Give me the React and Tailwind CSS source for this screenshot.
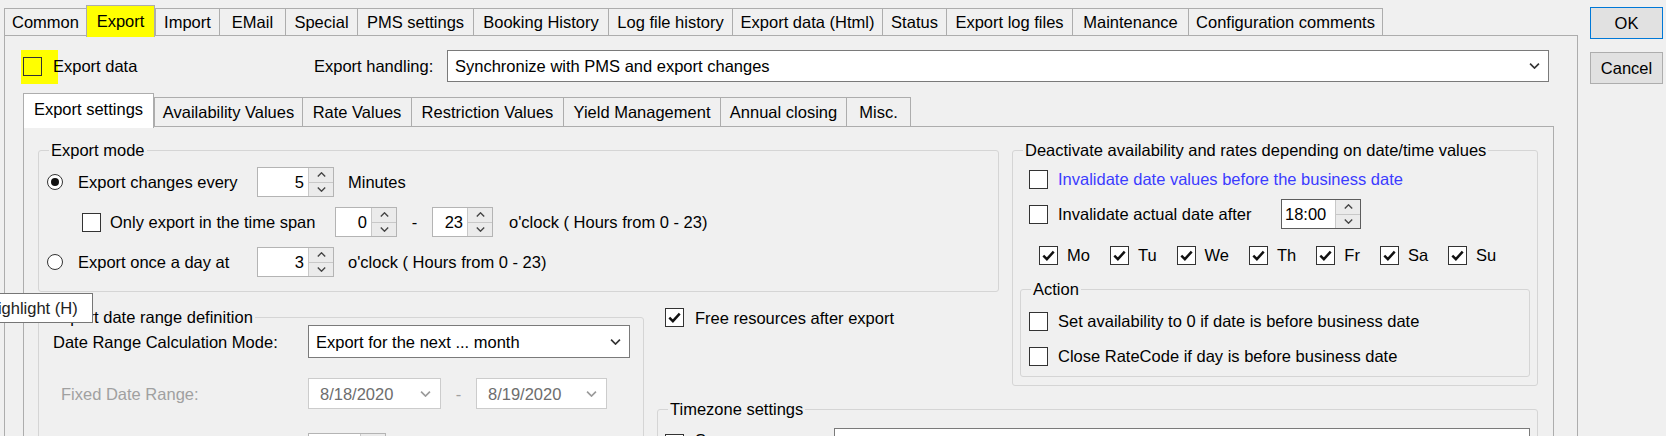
import clsx from 'clsx';

const outerTabs = [
  { label: 'Common', w: 'w-[82px]' },
  { label: 'Export', w: 'w-[69px]', active: true },
  { label: 'Import', w: 'w-[64px]' },
  { label: 'EMail', w: 'w-[66px]' },
  { label: 'Special', w: 'w-[72px]' },
  { label: 'PMS settings', w: 'w-[116px]' },
  { label: 'Booking History', w: 'w-[135px]' },
  { label: 'Log file history', w: 'w-[124px]' },
  { label: 'Export data (Html)', w: 'w-[150px]' },
  { label: 'Status', w: 'w-[64px]' },
  { label: 'Export log files', w: 'w-[126px]' },
  { label: 'Maintenance', w: 'w-[116px]' },
  { label: 'Configuration comments', w: 'w-[195px]' },
];

const innerTabs = [
  { label: 'Export settings', w: 'w-[131px]', active: true },
  { label: 'Availability Values', w: 'w-[148px]' },
  { label: 'Rate Values', w: 'w-[109px]' },
  { label: 'Restriction Values', w: 'w-[152px]' },
  { label: 'Yield Management', w: 'w-[157px]' },
  { label: 'Annual closing', w: 'w-[126px]' },
  { label: 'Misc.', w: 'w-[65px]' },
];

const days = ['Mo', 'Tu', 'We', 'Th', 'Fr', 'Sa', 'Su'];

// clear = no white fill, so the highlighter colour shows through the box
const Check = ({ checked, clear }) => (
  <span
    className={clsx(
      'relative flex h-[19px] w-[19px] shrink-0 items-center justify-center border border-[#333333]',
      clear ? 'bg-transparent' : 'bg-white',
    )}
  >
    {checked && (
      <svg width="13" height="11" viewBox="0 0 12 10">
        <path d="M1.2 5.2 L4.5 8.4 L10.8 1.4" fill="none" stroke="#111" strokeWidth="2.3" />
      </svg>
    )}
  </span>
);

const Radio = ({ checked }) => (
  <span className="flex h-[16px] w-[16px] shrink-0 items-center justify-center rounded-full border border-[#333333] bg-white">
    {checked && <span className="h-[8px] w-[8px] rounded-full bg-[#111]" />}
  </span>
);

const Chevron = ({ up, color = '#444', w = 9, h = 5 }) => (
  <svg width={w} height={h} viewBox="0 0 9 5">
    <path d={up ? 'M0.8 4.4 L4.5 0.8 L8.2 4.4' : 'M0.8 0.6 L4.5 4.2 L8.2 0.6'} fill="none" stroke={color} strokeWidth="1.4" />
  </svg>
);

const Spinner = ({ value, className, left, dark }) => (
  <div className={clsx('flex h-[30px] shrink-0 border bg-white', dark ? 'border-[#5c5c5c]' : 'border-[#b4b4b4]', className)}>
    <span className={clsx('flex flex-1 items-center', left ? 'pl-[3px]' : 'justify-end pr-[4px]')}>{value}</span>
    <div className="flex w-[25px] flex-col border-l border-[#c8c8c8]">
      <span className="flex flex-1 items-center justify-center border-b border-[#c8c8c8] bg-[#ebebeb]">
        <Chevron up />
      </span>
      <span className="flex flex-1 items-center justify-center bg-[#ebebeb]">
        <Chevron />
      </span>
    </div>
  </div>
);

const Combo = ({ value, className }) => (
  <div className={clsx('flex shrink-0 items-center border border-[#7a7a7a] bg-white', className)}>
    <span className="flex-1 truncate pl-[7px]">{value}</span>
    <span className="mr-[8px]">
      <Chevron color="#333" w={11} h={6} />
    </span>
  </div>
);

const DatePicker = ({ value, className }) => (
  <div className={clsx('flex h-[31px] shrink-0 items-center border border-[#cccccc] bg-white text-[#6d6d6d]', className)}>
    <span className="flex-1 pl-[11px]">{value}</span>
    <span className="mr-[9px]">
      <Chevron color="#9a9a9a" w={11} h={6} />
    </span>
  </div>
);

const GroupBox = ({ title, className, children }) => (
  <fieldset className={clsx('min-w-0 rounded-[3px] border border-[#d5d5d5]', className)}>
    <legend className="ml-[10px] px-[2px] leading-[18px]">{title}</legend>
    {children}
  </fieldset>
);

const CheckRow = ({ label, checked, className, gap = 'gap-[10px]' }) => (
  <div className={clsx('flex h-[20px] items-center', gap, className)}>
    <Check checked={checked} />
    <span className="whitespace-nowrap">{label}</span>
  </div>
);

const App = () => {
  return (
    <div className="relative flex h-[436px] w-[1666px] overflow-hidden bg-[#f0f0f0] pl-[4px] pt-[5px] font-['Liberation_Sans',Arial,sans-serif] text-[16.5px] leading-[20px] text-black">
      <div className="flex w-[1574px] shrink-0 flex-col">
        <div className="flex h-[30px] items-end">
          {outerTabs.map((tab, index) => (
            <div
              key={tab.label}
              className={clsx(
                'flex shrink-0 items-center justify-center whitespace-nowrap border-[#adadad]',
                tab.w,
                tab.active ? 'relative z-10 -mb-[2px] h-[32px] border-x border-t bg-[#ffff00] pb-[2px]' : 'h-[27px] border-l border-t bg-[#f0f0f0]',
                index === outerTabs.length - 1 && 'border-r',
              )}
            >
              {tab.label}
            </div>
          ))}
        </div>

        <div className="h-[420px] border border-[#adadad] bg-[#f0f0f0] pt-[14px]">
          <div className="relative flex h-[32px] items-center pr-[28px]">
            <span className="absolute left-[16px] top-0 h-[34px] w-[37px] bg-[#ffff00]" />
            <div className="flex w-[309px] shrink-0 items-center gap-[11px] pl-[18px]">
              <Check clear />
              <span className="relative">Export data</span>
            </div>
            <span className="w-[133px] shrink-0">Export handling:</span>
            <Combo value="Synchronize with PMS and export changes" className="h-[32px] flex-1" />
          </div>

          <div className="ml-[18px] mt-[11px] flex h-[33px] items-end">
            {innerTabs.map((tab, index) => (
              <div
                key={tab.label}
                className={clsx(
                  'flex shrink-0 items-center justify-center whitespace-nowrap border-[#adadad]',
                  tab.w,
                  tab.active ? 'relative z-10 -mb-[2px] h-[35px] border-x border-t bg-white pb-[5px]' : 'h-[29px] border-l border-t bg-[#f0f0f0]',
                  index === innerTabs.length - 1 && 'border-r',
                )}
              >
                {tab.label}
              </div>
            ))}
          </div>

          <div className="ml-[18px] h-[320px] w-[1531px] border border-[#adadad] bg-[#f0f0f0]">
            <div className="grid grid-cols-[606px_342px_526px] grid-rows-[167px_92px_auto] gap-x-[13px] pl-[14px] pt-[14px]">
              <GroupBox title="Export mode" className="col-span-2 col-start-1 row-start-1 h-[151px]">
                <div className="flex flex-col gap-[10px] pl-[8px] pt-[8px]">
                  <div className="flex h-[30px] items-center">
                    <div className="flex w-[210px] shrink-0 items-center gap-[15px]">
                      <Radio checked />
                      <span>Export changes every</span>
                    </div>
                    <Spinner value="5" className="w-[77px]" />
                    <span className="ml-[14px]">Minutes</span>
                  </div>
                  <div className="flex h-[30px] items-center pl-[35px]">
                    <div className="flex w-[253px] shrink-0 items-center gap-[9px]">
                      <Check />
                      <span>Only export in the time span</span>
                    </div>
                    <Spinner value="0" className="w-[62px]" />
                    <span className="w-[35px] shrink-0 text-center">-</span>
                    <Spinner value="23" className="w-[61px]" />
                    <span className="ml-[16px] whitespace-nowrap">o'clock ( Hours from 0 - 23)</span>
                  </div>
                  <div className="flex h-[30px] items-center">
                    <div className="flex w-[210px] shrink-0 items-center gap-[15px]">
                      <Radio />
                      <span>Export once a day at</span>
                    </div>
                    <Spinner value="3" className="w-[77px]" />
                    <span className="ml-[14px] whitespace-nowrap">o'clock ( Hours from 0 - 23)</span>
                  </div>
                </div>
              </GroupBox>

              <GroupBox title="Deactivate availability and rates depending on date/time values" className="col-start-3 row-span-2 row-start-1 h-[245px]">
                <div className="flex flex-col pl-[16px] pt-[10px]">
                  <CheckRow label="Invalidate date values before the business date" className="text-[#3c3cff]" />
                  <div className="mt-[10px] flex h-[30px] items-center">
                    <Check />
                    <span className="ml-[10px] w-[223px] shrink-0">Invalidate actual date after</span>
                    <Spinner value="18:00" left dark className="w-[80px]" />
                  </div>
                  <div className="mt-[16px] flex h-[20px] items-center gap-[20px] pl-[10px]">
                    {days.map((day) => (
                      <CheckRow key={day} label={day} checked gap="gap-[9px]" />
                    ))}
                  </div>
                </div>
                <GroupBox title="Action" className="mx-[7px] mt-[15px] h-[97px]">
                  <div className="flex flex-col gap-[15px] pl-[8px] pt-[13px]">
                    <CheckRow label="Set availability to 0 if date is before business date" />
                    <CheckRow label="Close RateCode if day is before business date" />
                  </div>
                </GroupBox>
              </GroupBox>

              <GroupBox title="Export date range definition" className="col-start-1 row-span-2 row-start-2 h-[200px]">
                <div className="-mt-[1px] pl-[14px]">
                  <div className="flex h-[33px] items-center">
                    <span className="w-[255px] shrink-0">Date Range Calculation Mode:</span>
                    <Combo value="Export for the next ... month" className="h-[33px] w-[322px]" />
                  </div>
                  <div className="mt-[20px] flex h-[31px] items-center">
                    <span className="ml-[8px] w-[247px] shrink-0 text-[#a0a0a0]">Fixed Date Range:</span>
                    <DatePicker value="8/18/2020" className="w-[133px]" />
                    <span className="w-[35px] shrink-0 text-center text-[#a0a0a0]">-</span>
                    <DatePicker value="8/19/2020" className="w-[131px]" />
                  </div>
                  <div className="mt-[24px] flex h-[30px] items-center pl-[255px]">
                    <Spinner value="" className="w-[78px]" />
                  </div>
                </div>
              </GroupBox>

              <div className="col-start-2 row-start-2 flex h-[19px] items-center gap-[11px] self-start pl-[8px]">
                <Check checked />
                <span>Free resources after export</span>
              </div>

              <GroupBox title="Timezone settings" className="col-span-2 col-start-2 row-start-3 h-[100px]">
                <div className="mt-[10px] flex h-[30px] items-center pl-[7px]">
                  <Check />
                  <span className="ml-[11px] w-[139px] shrink-0 self-start pt-[2px]">Source</span>
                  <div className="h-[30px] w-[696px] border border-[#7a7a7a] bg-white" />
                </div>
              </GroupBox>
            </div>
          </div>
        </div>
      </div>

      <div className="ml-[12px] flex flex-col gap-[13px] pt-[2px]">
        <div className="flex h-[32px] w-[73px] items-center justify-center border border-[#0078d7] bg-[#e1e1e1]">OK</div>
        <div className="flex h-[32px] w-[73px] items-center justify-center border border-[#adadad] bg-[#e1e1e1]">Cancel</div>
      </div>

      <div className="absolute left-[-21px] top-[293px] z-20 flex h-[30px] items-center border border-[#767676] bg-white pl-[6px] pr-[14px] text-[#222]">
        Highlight (H)
      </div>
    </div>
  );
};

export default App;
